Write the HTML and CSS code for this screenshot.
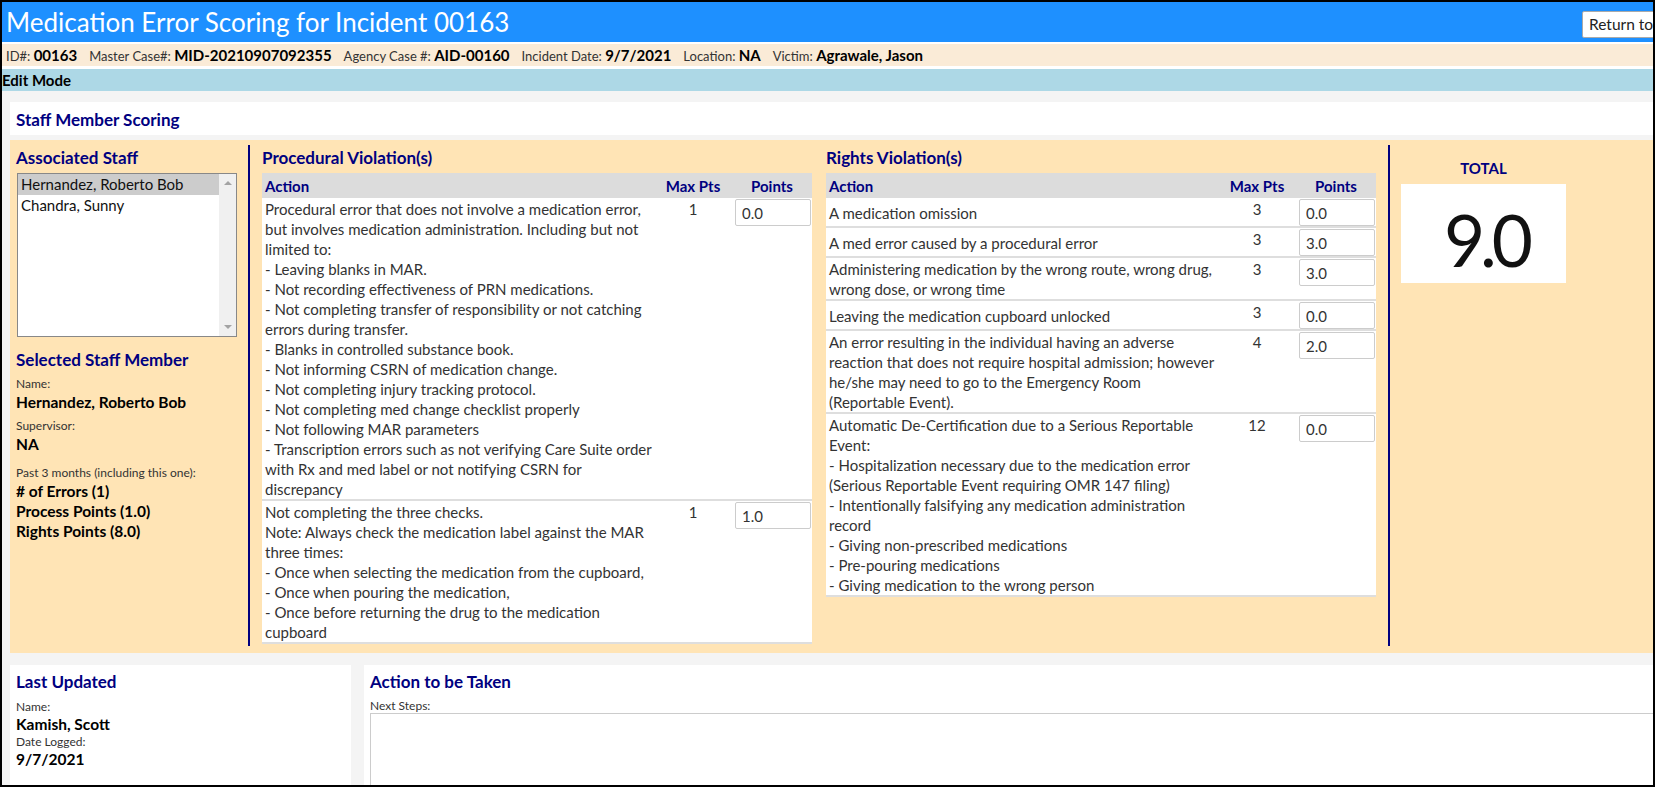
FILE: index.html
```html
<!DOCTYPE html>
<html lang="en">
<head>
  <meta charset="UTF-8">
  <meta name="viewport" content="width=device-width, initial-scale=1.0">
  <title>Medication Error Scoring</title>
  <link rel="stylesheet" href="styles.css">
</head>
<body>
  <div class="frame">
    <div class="app">
      <div class="title-bar">
        <h1>Medication Error Scoring for Incident 00163</h1>
        <button class="return-btn">Return to Incident</button>
      </div>

      <div class="info-bar">
        <span class="info-item">ID#: <b>00163</b></span>
        <span class="info-item">Master Case#: <b>MID-20210907092355</b></span>
        <span class="info-item">Agency Case #: <b>AID-00160</b></span>
        <span class="info-item">Incident Date: <b>9/7/2021</b></span>
        <span class="info-item">Location: <b>NA</b></span>
        <span class="info-item">Victim: <b>Agrawale, Jason</b></span>
      </div>

      <div class="mode-bar">Edit Mode</div>

      <div class="content">
        <div class="section-title">Staff Member Scoring</div>

        <div class="scoring">
          <!-- staff picker + summary of the selected person -->
          <div class="staff-col">
            <h3>Associated Staff</h3>
            <div class="listbox">
              <div class="options">
                <div class="option selected">Hernandez, Roberto Bob</div>
                <div class="option">Chandra, Sunny</div>
              </div>
              <div class="scrollbar">
                <span class="arrow-up"></span>
                <span class="arrow-down"></span>
              </div>
            </div>

            <h3 class="selected-title">Selected Staff Member</h3>
            <div class="field">
              <div class="label">Name:</div>
              <div class="value">Hernandez, Roberto Bob</div>
            </div>
            <div class="field">
              <div class="label">Supervisor:</div>
              <div class="value">NA</div>
            </div>
            <div class="field history">
              <div class="label">Past 3 months (including this one):</div>
              <div class="value"># of Errors (1)</div>
              <div class="value">Process Points (1.0)</div>
              <div class="value">Rights Points (8.0)</div>
            </div>
          </div>

          <div class="violations">
            <div class="violation-group">
              <h3>Procedural Violation(s)</h3>
              <table class="score-table">
                <colgroup>
                  <col class="col-action">
                  <col class="col-max">
                  <col class="col-points">
                </colgroup>
                <thead>
                  <tr>
                    <th>Action</th>
                    <th class="center">Max Pts</th>
                    <th class="center">Points</th>
                  </tr>
                </thead>
                <tbody>
                  <tr>
                    <td class="action">Procedural error that does not involve a medication error, but involves medication administration. Including but not limited to:<br>- Leaving blanks in MAR.<br>- Not recording effectiveness of PRN medications.<br>- Not completing transfer of responsibility or not catching errors during transfer.<br>- Blanks in controlled substance book.<br>- Not informing CSRN of medication change.<br>- Not completing injury tracking protocol.<br>- Not completing med change checklist properly<br>- Not following MAR parameters<br>- Transcription errors such as not verifying Care Suite order with Rx and med label or not notifying CSRN for discrepancy</td>
                    <td class="center">1</td>
                    <td><input type="text" value="0.0"></td>
                  </tr>
                  <tr>
                    <td class="action">Not completing the three checks.<br>Note: Always check the medication label against the MAR three times:<br>- Once when selecting the medication from the cupboard,<br>- Once when pouring the medication,<br>- Once before returning the drug to the medication cupboard</td>
                    <td class="center">1</td>
                    <td><input type="text" value="1.0"></td>
                  </tr>
                </tbody>
              </table>
            </div>

            <div class="violation-group">
              <h3>Rights Violation(s)</h3>
              <table class="score-table">
                <colgroup>
                  <col class="col-action">
                  <col class="col-max">
                  <col class="col-points">
                </colgroup>
                <thead>
                  <tr>
                    <th>Action</th>
                    <th class="center">Max Pts</th>
                    <th class="center">Points</th>
                  </tr>
                </thead>
                <tbody>
                  <tr>
                    <td class="action">A medication omission</td>
                    <td class="center">3</td>
                    <td><input type="text" value="0.0"></td>
                  </tr>
                  <tr>
                    <td class="action">A med error caused by a procedural error</td>
                    <td class="center">3</td>
                    <td><input type="text" value="3.0"></td>
                  </tr>
                  <tr>
                    <td class="action">Administering medication by the wrong route, wrong drug, wrong dose, or wrong time</td>
                    <td class="center">3</td>
                    <td><input type="text" value="3.0"></td>
                  </tr>
                  <tr>
                    <td class="action">Leaving the medication cupboard unlocked</td>
                    <td class="center">3</td>
                    <td><input type="text" value="0.0"></td>
                  </tr>
                  <tr>
                    <td class="action">An error resulting in the individual having an adverse reaction that does not require hospital admission; however he/she may need to go to the Emergency Room (Reportable Event).</td>
                    <td class="center">4</td>
                    <td><input type="text" value="2.0"></td>
                  </tr>
                  <tr>
                    <td class="action">Automatic De-Certification due to a Serious Reportable Event:<br>- Hospitalization necessary due to the medication error (Serious Reportable Event requiring OMR 147 filing)<br>- Intentionally falsifying any medication administration record<br>- Giving non-prescribed medications<br>- Pre-pouring medications<br>- Giving medication to the wrong person</td>
                    <td class="center">12</td>
                    <td><input type="text" value="0.0"></td>
                  </tr>
                </tbody>
              </table>
            </div>
          </div>

          <div class="total-col">
            <h4>TOTAL</h4>
            <div class="total-box">9.0</div>
          </div>
        </div>

        <div class="bottom">
          <div class="card last-updated">
            <h3>Last Updated</h3>
            <div class="label">Name:</div>
            <div class="value">Kamish, Scott</div>
            <div class="label">Date Logged:</div>
            <div class="value">9/7/2021</div>
          </div>
          <div class="card action-card">
            <h3>Action to be Taken</h3>
            <div class="label">Next Steps:</div>
            <textarea rows="6"></textarea>
          </div>
        </div>
      </div>
    </div>
  </div>
</body>
</html>
```

FILE: styles.css
```css
* {
  box-sizing: border-box;
}
html, body {
  margin: 0;
  height: 100%;
}
body {
  font-family: Lato, "Open Sans", sans-serif;
  color: #333;
  background: #fff;
}
.frame {
  height: 100vh;
  border: 2px solid #000;
  overflow: hidden;
}
.app {
  width: 1760px;
}

/* header strips */
.title-bar {
  display: flex;
  align-items: center;
  height: 40px;
  padding: 0 10px 0 4px;
  background: #1e90ff;
}
.title-bar h1 {
  flex: 1;
  margin: 0;
  font-size: 26px;
  font-weight: normal;
  color: #fff;
}
.return-btn {
  width: 170px;
  height: 27px;
  margin-top: 4px;
  padding: 0 6px;
  text-align: left;
  font-family: inherit;
  font-size: 15.5px;
  color: #222;
  background: #fff;
  border: 1px solid #aaa;
  border-radius: 2px;
}
.info-bar {
  display: flex;
  align-items: center;
  height: 22px;
  margin-top: 2px;
  padding-left: 4px;
  background: #faebd7;
  font-size: 13px;
  color: #333;
}
.info-item {
  margin-right: 12px;
}
.info-item b {
  font-size: 15px;
  color: #000;
}
.mode-bar {
  height: 22px;
  margin-top: 3px;
  line-height: 22px;
  background: #add8e6;
  font-size: 15px;
  font-weight: bold;
  color: #000;
}

/* page body */
.content {
  padding: 11px 0 0 8px;
  background: #f4f4f4;
}
.section-title {
  height: 33px;
  padding: 3px 6px 0;
  line-height: 30px;
  background: #fff;
  font-size: 17px;
  font-weight: bold;
  color: #000080;
}
h3 {
  margin: 0;
  font-size: 17px;
  line-height: 20px;
  color: #000080;
}
.label {
  font-size: 12px;
  line-height: 16px;
  color: #333;
}
.value {
  font-size: 15.5px;
  font-weight: bold;
  line-height: 20px;
  color: #000;
}

.scoring {
  display: flex;
  margin-top: 5px;
  padding: 5px 0 7px 6px;
  background: #ffe4b5;
}
.staff-col {
  width: 221px;
  margin-right: 11px;
  padding-top: 3px;
}
.staff-col h3 {
  margin-bottom: 5px;
}
.listbox {
  display: flex;
  width: 220px;
  height: 164px;
  margin-left: 1px;
  background: #fff;
  border: 1px solid #888;
}
.options {
  flex: 1;
}
.option {
  height: 21px;
  padding-left: 3px;
  font-size: 15px;
  line-height: 21px;
  color: #111;
}
.option.selected {
  background: #ccc;
}
.scrollbar {
  display: flex;
  flex-direction: column;
  justify-content: space-between;
  align-items: center;
  width: 17px;
  padding: 7px 0;
  background: #f0f0f0;
}
.arrow-up {
  border-left: 4px solid transparent;
  border-right: 4px solid transparent;
  border-bottom: 4px solid #a3a3a3;
}
.arrow-down {
  border-left: 4px solid transparent;
  border-right: 4px solid transparent;
  border-top: 4px solid #a3a3a3;
}
.staff-col .selected-title {
  margin: 13px 0 0;
}
.field {
  margin-top: 6px;
}
.field.history {
  margin-top: 11px;
}

.violations {
  display: flex;
  gap: 14px;
  padding: 3px 12px 2px;
  border-left: 2px solid #000080;
}
.violation-group h3 {
  margin-bottom: 5px;
}
.score-table {
  width: 550px;
  table-layout: fixed;
  border-collapse: collapse;
}
.col-action {
  width: 392px;
}
.col-max {
  width: 78px;
}
.col-points {
  width: 80px;
}
.score-table th {
  height: 25px;
  padding: 0 3px;
  text-align: left;
  background: #dcdcdc;
  font-size: 15px;
  color: #000080;
}
.score-table td {
  padding: 1px 3px 0;
  vertical-align: top;
  font-size: 15px;
  line-height: 20px;
  background: #fff;
  border-bottom: 2px solid #dedede;
}
.score-table td.action {
  padding-right: 0;
  vertical-align: middle;
}
.score-table .center {
  text-align: center;
}
.score-table input {
  width: 76px;
  height: 27px;
  padding: 0 6px;
  font-family: inherit;
  font-size: 15px;
  color: #333;
  border: 1px solid #ccc;
  border-radius: 2px;
}

.total-col {
  padding: 13px 11px 0;
  border-left: 2px solid #000080;
}
.total-col h4 {
  margin: 0;
  width: 165px;
  text-align: center;
  font-size: 15px;
  line-height: 20px;
  color: #000080;
}
.total-box {
  display: flex;
  align-items: center;
  justify-content: center;
  width: 165px;
  height: 99px;
  margin-top: 6px;
  padding: 12px 0 0 5px;
  background: #fff;
  font-size: 71px;
  line-height: 1;
  letter-spacing: -5px;
  color: #111;
}

.bottom {
  display: flex;
  gap: 13px;
  margin-top: 12px;
}
.card {
  height: 130px;
  padding: 7px 6px;
  background: #fff;
}
.card h3 {
  margin-bottom: 7px;
}
.card .label {
  line-height: 15px;
}
.last-updated {
  width: 341px;
}
.action-card {
  flex: 1;
}
.action-card .label {
  line-height: 14px;
}
.action-card textarea {
  display: block;
  width: 100%;
  height: 110px;
  border: 1px solid #ccc;
  resize: none;
}
```
